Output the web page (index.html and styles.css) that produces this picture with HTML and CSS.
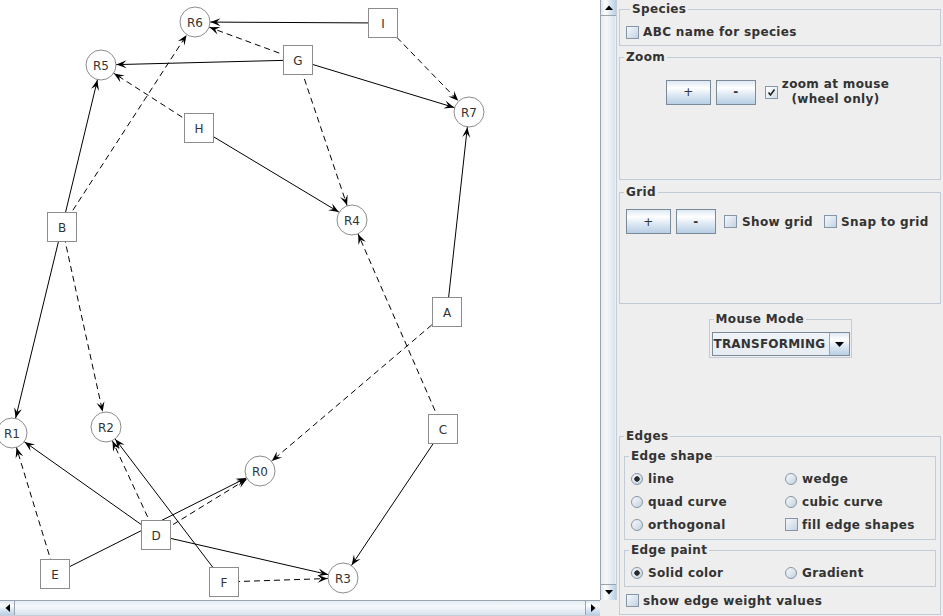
FILE: index.html
```html
<!DOCTYPE html>
<html>
<head>
<meta charset="utf-8">
<title>Graph editor</title>
<link rel="stylesheet" href="styles.css">
</head>
<body>
<div class="app">
  <div class="scrollpane">
    <div class="sp-top">
      <div class="viewport">
        <svg class="graph" width="600" height="600" viewBox="0 0 600 600">
          <defs>
            <marker id="arr" markerUnits="userSpaceOnUse" markerWidth="40" markerHeight="20" viewBox="-20 -10 40 20" refX="15.5" refY="0" orient="auto">
              <path d="M0,0 L-10,-4 L-6,0 L-10,4 Z" fill="#000"/>
            </marker>
          </defs>
          <g class="edges">
            <line class="s" x1="383" y1="23" x2="195" y2="22" marker-end="url(#arr)"/>
            <line class="s" x1="298" y1="60" x2="101" y2="65" marker-end="url(#arr)"/>
            <line class="s" x1="298" y1="60" x2="469" y2="112" marker-end="url(#arr)"/>
            <line class="s" x1="199" y1="128" x2="352" y2="220" marker-end="url(#arr)"/>
            <line class="s" x1="62" y1="227" x2="101" y2="65" marker-end="url(#arr)"/>
            <line class="s" x1="62" y1="227" x2="12" y2="433" marker-end="url(#arr)"/>
            <line class="s" x1="447" y1="312" x2="469" y2="112" marker-end="url(#arr)"/>
            <line class="s" x1="443" y1="429" x2="343" y2="578" marker-end="url(#arr)"/>
            <line class="s" x1="156" y1="535" x2="12" y2="433" marker-end="url(#arr)"/>
            <line class="s" x1="55" y1="574" x2="260" y2="471" marker-end="url(#arr)"/>
            <line class="s" x1="156" y1="535" x2="343" y2="578" marker-end="url(#arr)"/>
            <line class="s" x1="224" y1="582" x2="106" y2="427" marker-end="url(#arr)"/>
            <line class="d" x1="298" y1="60" x2="195" y2="22" marker-end="url(#arr)"/>
            <line class="d" x1="298" y1="60" x2="352" y2="220" marker-end="url(#arr)"/>
            <line class="d" x1="383" y1="23" x2="469" y2="112" marker-end="url(#arr)"/>
            <line class="d" x1="199" y1="128" x2="101" y2="65" marker-end="url(#arr)"/>
            <line class="d" x1="62" y1="227" x2="195" y2="22" marker-end="url(#arr)"/>
            <line class="d" x1="62" y1="227" x2="106" y2="427" marker-end="url(#arr)"/>
            <line class="d" x1="447" y1="312" x2="260" y2="471" marker-end="url(#arr)"/>
            <line class="d" x1="443" y1="429" x2="352" y2="220" marker-end="url(#arr)"/>
            <line class="d" x1="156" y1="535" x2="106" y2="427" marker-end="url(#arr)"/>
            <line class="d" x1="156" y1="535" x2="260" y2="471" marker-end="url(#arr)"/>
            <line class="d" x1="55" y1="574" x2="12" y2="433" marker-end="url(#arr)"/>
            <line class="d" x1="224" y1="582" x2="343" y2="578" marker-end="url(#arr)"/>
          </g>
          <g class="nodes">
            <circle cx="195" cy="22" r="15"/><text x="195" y="26.5">R6</text>
            <circle cx="101" cy="65" r="15"/><text x="101" y="69.5">R5</text>
            <circle cx="469" cy="112" r="15"/><text x="469" y="116.5">R7</text>
            <circle cx="352" cy="220" r="15"/><text x="352" y="224.5">R4</text>
            <circle cx="12" cy="433" r="15"/><text x="12" y="437.5">R1</text>
            <circle cx="106" cy="427" r="15"/><text x="106" y="431.5">R2</text>
            <circle cx="260" cy="471" r="15"/><text x="260" y="475.5">R0</text>
            <circle cx="343" cy="578" r="15"/><text x="343" y="582.5">R3</text>

            <rect x="368.5" y="8.5" width="29" height="29"/><text x="383" y="27.5">I</text>
            <rect x="283.5" y="45.5" width="29" height="29"/><text x="298" y="64.5">G</text>
            <rect x="184.5" y="113.5" width="29" height="29"/><text x="199" y="132.5">H</text>
            <rect x="47.5" y="212.5" width="29" height="29"/><text x="62" y="231.5">B</text>
            <rect x="432.5" y="297.5" width="29" height="29"/><text x="447" y="316.5">A</text>
            <rect x="428.5" y="414.5" width="29" height="29"/><text x="443" y="433.5">C</text>
            <rect x="141.5" y="520.5" width="29" height="29"/><text x="156" y="539.5">D</text>
            <rect x="40.5" y="559.5" width="29" height="29"/><text x="55" y="578.5">E</text>
            <rect x="209.5" y="567.5" width="29" height="29"/><text x="224" y="586.5">F</text>
          </g>
        </svg>
      </div>
      <div class="vbar">
        <div class="sbtn"><svg width="8" height="5" viewBox="0 0 8 5"><path d="M0,5 L4,0.5 L8,5 Z" fill="#000"/></svg></div>
        <div class="thumb vthumb"></div>
        <div class="sbtn"><svg width="8" height="5" viewBox="0 0 8 5"><path d="M0,0 L4,4.5 L8,0 Z" fill="#000"/></svg></div>
      </div>
    </div>
    <div class="sp-bottom">
      <div class="hbar">
        <div class="hbtn"><svg width="5" height="8" viewBox="0 0 5 8"><path d="M5,0 L0.5,4 L5,8 Z" fill="#000"/></svg></div>
        <div class="thumb hthumb"></div>
        <div class="hbtn"><svg width="5" height="8" viewBox="0 0 5 8"><path d="M0,0 L4.5,4 L0,8 Z" fill="#000"/></svg></div>
      </div>
      <div class="corner"></div>
    </div>
  </div>

  <div class="controls">
    <div class="tbox species">
      <div class="ttl">Species</div>
      <div class="row">
        <span class="cb"></span><span>ABC name for species</span>
      </div>
    </div>

    <div class="tbox zoom">
      <div class="ttl">Zoom</div>
      <div class="zoomrow">
        <div class="btn bplus">+</div>
        <div class="btn bminus">-</div>
        <span class="cb checked"><svg width="9" height="9" viewBox="0 0 9 9"><path d="M1.5,4.5 L3.5,7 L7.5,1.5" fill="none" stroke="#222" stroke-width="1.6"/></svg></span>
        <div class="zlabel">zoom at mouse<br>(wheel only)</div>
      </div>
    </div>

    <div class="tbox grid">
      <div class="ttl">Grid</div>
      <div class="gridrow">
        <div class="btn bplus">+</div>
        <div class="btn bminus">-</div>
        <span class="cb cb-show"></span><span>Show grid</span>
        <span class="cb cb-snap"></span><span>Snap to grid</span>
      </div>
    </div>

    <div class="tbox mouse">
      <div class="ttl">Mouse Mode</div>
      <div class="combo">
        <div class="combo-text">TRANSFORMING</div>
        <div class="combo-arrow"><svg width="9" height="5" viewBox="0 0 9 5"><path d="M0,0 L4.5,5 L9,0 Z" fill="#000"/></svg></div>
      </div>
    </div>

    <div class="tbox edges-box">
      <div class="ttl">Edges</div>
      <div class="tbox inner shape">
        <div class="ttl">Edge shape</div>
        <div class="opts">
          <div class="opt"><span class="radio on"></span>line</div>
          <div class="opt"><span class="radio"></span>wedge</div>
          <div class="opt"><span class="radio"></span>quad curve</div>
          <div class="opt"><span class="radio"></span>cubic curve</div>
          <div class="opt"><span class="radio"></span>orthogonal</div>
          <div class="opt"><span class="cb cb-fill"></span>fill edge shapes</div>
        </div>
      </div>
      <div class="tbox inner paint">
        <div class="ttl">Edge paint</div>
        <div class="opts">
          <div class="opt"><span class="radio on"></span>Solid color</div>
          <div class="opt"><span class="radio"></span>Gradient</div>
        </div>
      </div>
      <div class="row weight">
        <span class="cb"></span><span>show edge weight values</span>
      </div>
    </div>
  </div>
</div>
</body>
</html>
```

FILE: styles.css
```css
* { box-sizing: border-box; }
html, body { margin: 0; padding: 0; }
body {
  width: 943px;
  height: 616px;
  overflow: hidden;
  background: #eeeeee;
  font: bold 12px "DejaVu Sans", "Liberation Sans", sans-serif;
  color: #333333;
}
.app { display: flex; width: 943px; height: 616px; }

/* ---------- scroll pane ---------- */
.scrollpane { width: 617px; display: flex; flex-direction: column; }
.sp-top { display: flex; height: 600px; }
.viewport { width: 600px; height: 600px; background: #ffffff; overflow: hidden; }
.graph { display: block; }
.graph .edges line { stroke: #000; stroke-width: 1; }
.graph .edges line.d { stroke-dasharray: 6 4; }
.graph .nodes circle, .graph .nodes rect { fill: #ffffff; stroke: #8c8c8c; stroke-width: 1; }
.graph .nodes text {
  font: 12px "DejaVu Sans", "Liberation Sans", sans-serif;
  fill: #333333;
  text-anchor: middle;
}

.vbar {
  width: 17px;
  height: 600px;
  display: flex;
  flex-direction: column;
  border-left: 1px solid #9aa4ae;
  border-right: 1px solid #c6cdd4;
  background: #eeeeee;
}
.sbtn {
  height: 16px;
  display: flex;
  align-items: center;
  justify-content: center;
  background: linear-gradient(to right, #dde8f3, #ffffff 30%, #dde8f3 60%, #b8cfe5);
  border-bottom: 1px solid #9aa4ae;
}
.sbtn:last-child { border-bottom: none; border-top: 1px solid #9aa4ae; }
.thumb { flex: 1; }
.vthumb {
  background: linear-gradient(to right, #e6edf4, #f4f7fa 40%, #d9e3ed);
  margin: 0 1px 0 0;
}
.sp-bottom { display: flex; height: 16px; }
.hbar {
  width: 600px;
  display: flex;
  border-top: 1px solid #9aa4ae;
  border-bottom: 1px solid #c6cdd4;
}
.hbtn {
  width: 15px;
  display: flex;
  align-items: center;
  justify-content: center;
  background: linear-gradient(#dde8f3, #ffffff 30%, #dde8f3 60%, #b8cfe5);
  border-right: 1px solid #9aa4ae;
}
.hbtn:last-child { border-right: none; border-left: 1px solid #9aa4ae; }
.hthumb { background: linear-gradient(#e6edf4, #f4f7fa 40%, #d9e3ed); }
.corner { width: 17px; background: #eeeeee; }

/* ---------- controls ---------- */
.controls {
  width: 326px;
  padding: 9px 2px 0 2px;
  display: flex;
  flex-direction: column;
  letter-spacing: 0.35px;
}
.tbox { border: 1px solid #c3ccd6; }
.ttl {
  display: table;
  margin: -8px 0 0 4px;
  padding: 0 2px;
  line-height: 14px;
  background: #eeeeee;
}
.row { display: flex; align-items: center; height: 18px; }

.cb {
  width: 13px;
  height: 13px;
  flex: none;
  border: 1px solid #8796a6;
  background: linear-gradient(135deg, #f4f7fa, #dde6ef 50%, #c3d2e1);
  display: inline-flex;
  align-items: center;
  justify-content: center;
  margin-right: 4px;
}
.cb.checked { background: linear-gradient(135deg, #ffffff, #e6edf4 60%, #cfdbe7); }
.radio {
  width: 12px;
  height: 12px;
  flex: none;
  border-radius: 50%;
  border: 1px solid #8796a6;
  background: linear-gradient(135deg, #f6f9fb, #dbe4ed 55%, #c0cfdf);
  margin-right: 5px;
}
.radio.on {
  background: radial-gradient(circle at 50% 50%, #2a2a2a 0, #2a2a2a 2.4px, transparent 3px),
              linear-gradient(135deg, #f6f9fb, #dbe4ed 55%, #c0cfdf);
}
.btn {
  height: 25px;
  flex: none;
  border: 1px solid #7a8a99;
  background: linear-gradient(#dde8f3, #ffffff 30%, #dde8f3 60%, #b8cfe5);
  display: flex;
  align-items: center;
  justify-content: center;
  font-weight: normal;
  color: #333;
}
.bplus { width: 45px; margin-right: 5px; }
.bminus { width: 40px; font-weight: bold; }

.species { padding: 0 0 4px 6px; }
.species .row { margin-top: 7px; }

.zoom { margin-top: 11px; height: 123px; }
.zoomrow {
  margin-top: 13px;
  height: 30px;
  display: flex;
  align-items: center;
  justify-content: center;
  padding-right: 5px;
}
.zoom .cb { margin-left: 9px; margin-right: 4px; }
.zlabel { line-height: 15px; text-align: center; }

.grid { margin-top: 12px; height: 112px; }
.gridrow {
  margin-top: 10px;
  padding-left: 6px;
  height: 25px;
  display: flex;
  align-items: center;
}
.cb-show { margin-left: 8px; margin-right: 5px; }
.cb-snap { margin-left: 11px; margin-right: 4px; }

.mouse { margin-top: 15px; width: 143px; align-self: center; padding-bottom: 1px; }
.combo {
  margin: 6px 0 0 2px;
  width: 138px;
  height: 24px;
  display: flex;
  border: 1px solid #7a8a99;
  letter-spacing: 0.2px;
}
.combo-text {
  flex: 1;
  display: flex;
  align-items: center;
  padding-left: 1px;
  background: linear-gradient(#f0f4f8, #e6ecf2);
}
.combo-arrow {
  width: 20px;
  display: flex;
  align-items: center;
  justify-content: center;
  border-left: 1px solid #9aa8b6;
  background: linear-gradient(#dde8f3, #ffffff 30%, #dde8f3 60%, #b8cfe5);
}

.edges-box { margin-top: 78px; padding-bottom: 2px; }
.inner { margin: 0 4px; }
.shape { margin-top: 13px; padding-bottom: 3px; }
.shape .opts { margin-top: 4px; }
.paint { margin-top: 10px; padding-bottom: 2px; }
.paint .opts { margin-top: 4px; }
.opts {
  padding-left: 6px;
  display: grid;
  grid-template-columns: 154px 1fr;
  grid-auto-rows: 23px;
}
.opt { display: flex; align-items: center; }
.opt .cb { margin-right: 4px; }
.weight { margin-top: 2px; height: 23px; padding-left: 6px; }
```
